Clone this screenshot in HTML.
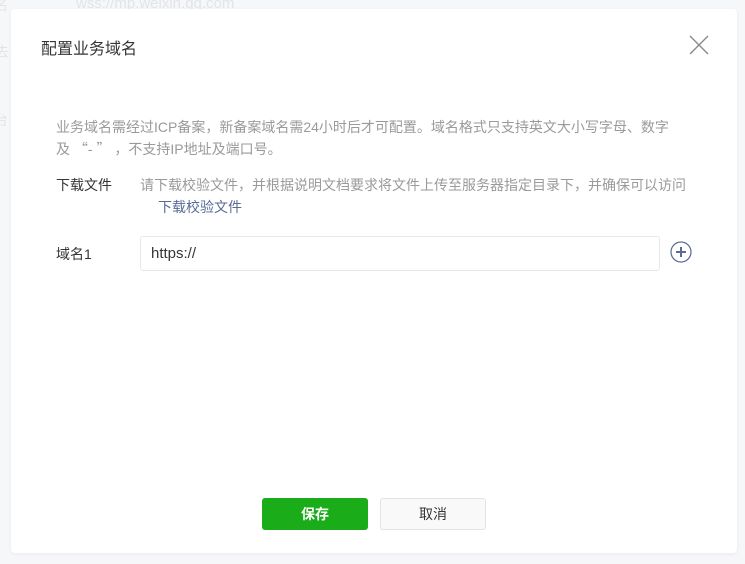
<!DOCTYPE html>
<html><head><meta charset="utf-8"><style>
body{margin:0;width:745px;height:564px;background:#f6f7f9;position:relative;overflow:hidden;font-family:"Liberation Sans","Noto Sans CJK SC",sans-serif;}
.bg{position:absolute;color:#e3e4e6;font-size:14px}
.dlg{position:absolute;left:11px;top:9px;width:726px;height:544px;background:#fff;border-radius:4px;box-shadow:0 1px 4px rgba(0,0,0,.05)}
.a{position:absolute;white-space:nowrap}
.q{font-family:"Noto Sans CJK SC",sans-serif}
</style></head><body>
<div class="bg" style="left:76px;top:-5px;font-size:15px">wss://mp.weixin.qq.com</div>
<div class="bg" style="left:-6px;top:-5px">名</div>
<div class="bg" style="left:-5px;top:42px">去</div>
<div class="bg" style="left:-6px;top:110px">台</div>
<div class="dlg">
<div class="a" style="left:30px;top:26px;font-size:16px;color:#353535">配置业务域名</div>
<svg class="a" style="left:678px;top:26px" width="20" height="20"><path d="M1 1L19 19M19 1L1 19" stroke="#8a8a8a" stroke-width="1.4"/></svg>
<div class="a" style="left:45px;top:107px;font-size:14px;color:#9a9a9a;line-height:22px">业务域名需经过ICP备案，新备案域名需24小时后才可配置。域名格式只支持英文大小写字母、数字<br>及 <span class="q">“</span>- <span class="q">”</span> ，不支持IP地址及端口号。</div>
<div class="a" style="left:45px;top:166px;font-size:14px;color:#353535">下载文件</div>
<div class="a" style="left:129px;top:166px;font-size:14px;color:#9a9a9a">请下载校验文件，并根据说明文档要求将文件上传至服务器指定目录下，并确保可以访问</div>
<div class="a" style="left:147px;top:188px;font-size:14px;color:#576b95">下载校验文件</div>
<div class="a" style="left:45px;top:235px;font-size:14px;color:#353535">域名1</div>
<div class="a" style="left:129px;top:227px;width:518px;height:33px;border:1px solid #e4e8eb;border-radius:3px"></div>
<div class="a" style="left:140px;top:236px;font-size:15px;color:#353535">https://</div>
<svg class="a" style="left:659px;top:232px" width="22" height="22"><circle cx="11" cy="11" r="10" fill="none" stroke="#576b95" stroke-width="1.2"/><path d="M6 11H16M11 6V16" stroke="#576b95" stroke-width="2"/></svg>
<div class="a" style="left:251px;top:489px;width:106px;height:32px;background:#1aad19;border-radius:3px;color:#fff;font-size:14px;font-weight:bold;text-align:center;line-height:32px">保存</div>
<div class="a" style="left:369px;top:489px;width:104px;height:30px;background:#f9f9f9;border:1px solid #e4e4e4;border-radius:3px;color:#353535;font-size:14px;text-align:center;line-height:30px">取消</div>
</div>
</body></html>
